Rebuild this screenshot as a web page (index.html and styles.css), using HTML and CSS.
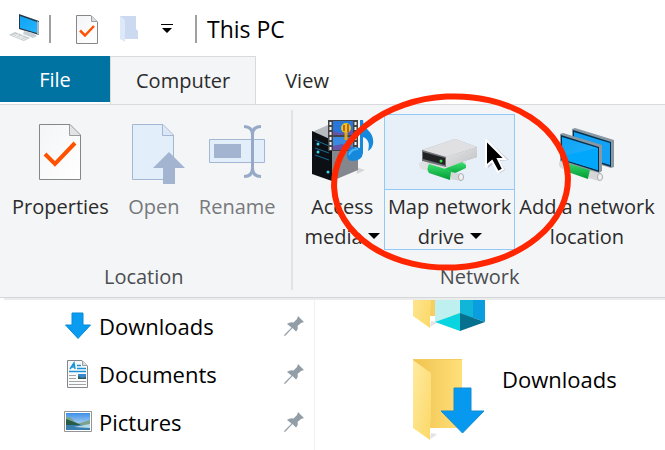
FILE: index.html
```html
<!DOCTYPE html>
<html lang="en">
<head>
    <meta charset="UTF-8">
    <meta name="viewport" content="width=device-width, initial-scale=1.0">
    <title>This PC</title>
    <link rel="stylesheet" href="styles.css">
</head>
<body>

    <!-- Shared shapes -->
    <svg class="defs" width="0" height="0" aria-hidden="true">
        <defs>
            <linearGradient id="paper" x1="0" y1="0" x2="1" y2="1">
                <stop offset="0" stop-color="#f4f5f7"/>
                <stop offset="1" stop-color="#ffffff"/>
            </linearGradient>
            <linearGradient id="folderBack" x1="0" y1="0" x2="1" y2="0">
                <stop offset="0" stop-color="#f0c34e"/>
                <stop offset="1" stop-color="#ffe07a"/>
            </linearGradient>
            <linearGradient id="folderFlap" x1="0" y1="0" x2="1" y2="1">
                <stop offset="0" stop-color="#ffeaa0"/>
                <stop offset="1" stop-color="#fbd867"/>
            </linearGradient>
            <linearGradient id="screen" x1="0" y1="0" x2="1" y2="1">
                <stop offset="0" stop-color="#10a4f4"/>
                <stop offset="1" stop-color="#24b4ff"/>
            </linearGradient>
            <linearGradient id="pipe" x1="0" y1="0" x2="0" y2="1">
                <stop offset="0" stop-color="#3ce070"/>
                <stop offset="1" stop-color="#009a34"/>
            </linearGradient>
            <linearGradient id="metal" x1="0" y1="0" x2="1" y2="1">
                <stop offset="0" stop-color="#e6e6e8"/>
                <stop offset="1" stop-color="#c0c1c4"/>
            </linearGradient>
            <linearGradient id="sky" x1="0" y1="0" x2="0" y2="1">
                <stop offset="0" stop-color="#3d8fe6"/>
                <stop offset="1" stop-color="#e2f3fb"/>
            </linearGradient>
            <symbol id="pin" viewBox="0 0 20 20">
                <path d="M14 0 L20 6 L17 7 L13.500 10 Q14.500 13 12 15.500 L8.500 12 L1.500 19.500 L0 20 L.5 18.500 L7.500 11.500 L3 8 Q6 5.500 9.500 6.500 L13 3 Z" fill="#929ea7"/>
            </symbol>
            <symbol id="folder" viewBox="0 0 52 84">
                <path d="M17 80 L22 77 L24 75 L18 74 Z" fill="#e4e4e4"/>
                <path d="M0 0 H49 V69 H16 L0 60 Z" fill="url(#folderBack)"/>
                <path d="M0 1 L18 14 V58 L17 69 V81 L0 69 Z" fill="url(#folderFlap)"/>
                <path d="M0 .5 H49" stroke="#f3cd61"/>
            </symbol>
        </defs>
    </svg>

    <!-- Title bar -->
    <header class="title-bar">
        <svg class="pc-icon" width="32" height="30" viewBox="0 0 32 30" aria-hidden="true">
            <path d="M10 0 L30 7 V21 L10 15 Z" fill="#263a49"/>
            <path d="M11 2 L28 8 V19 L11 14 Z" fill="url(#screen)"/>
            <path d="M28 7 L30 8 V21 L28 20 Z" fill="#aab5bd"/>
            <path d="M15 17 L24 19 L28 22 L24 24 L14 20 Z" fill="#c9d0d5"/>
            <path d="M0 21 L6 18 L21 24 L15 27 Z" fill="#c2c8cc"/>
            <path d="M3 21 L16 26 M5 20 L18 25 M7 22 L11 19 M11 24 L15 21" stroke="#edf0f2"/>
        </svg>
        <span class="bar-line"></span>
        <button class="quick-btn" aria-label="Properties">
            <svg width="22" height="29" viewBox="0 0 22 29">
                <path d="M.5 .5 H15 L21.500 7 V28.500 H.5 Z" fill="url(#paper)" stroke="#85878a"/>
                <path d="M15.500 1 V6.500 H21" fill="#dcdddd" stroke="#9b9d9f"/>
                <path d="M4 15.500 L9 20.500 L18 11" fill="none" stroke="#ff5200" stroke-width="2.500"/>
            </svg>
        </button>
        <button class="quick-btn" aria-label="New folder">
            <svg width="22" height="28" viewBox="-3 0 22 28">
                <path d="M1 1 H17 V14 L19 16 V24 H6 L1 22 Z" fill="#cbdaf0"/>
                <path d="M1 1 L6 5 V27 L1 24 Z" fill="#dde8f8"/>
            </svg>
        </button>
        <button class="quick-btn" aria-label="Customize Quick Access Toolbar">
            <svg width="12" height="10" viewBox="0 0 12 10">
                <path d="M0 0 H12 V1 H0 Z M1 4 H11 L6 9 Z" fill="#000"/>
            </svg>
        </button>
        <span class="bar-line"></span>
        <h1 class="title">This PC</h1>
    </header>

    <!-- Tabs -->
    <nav class="tabs">
        <button class="tab tab-file">File</button>
        <button class="tab tab-active">Computer</button>
        <button class="tab">View</button>
    </nav>

    <!-- Ribbon -->
    <section class="ribbon">
        <div class="group group-location">
            <div class="group-buttons">
                <button class="ribbon-btn">
                    <span class="btn-icon">
                        <svg width="42" height="60" viewBox="0 0 42 60">
                            <path d="M.5 .5 H31 L41.500 11 V55.500 H.5 Z" fill="url(#paper)" stroke="#85878a"/>
                            <path d="M30.500 1 V11.500 H41" fill="#e2e3e4" stroke="#9b9d9f"/>
                            <path d="M6 30 L16 40 L36 19" fill="none" stroke="#ff5200" stroke-width="4"/>
                        </svg>
                    </span>
                    <span class="btn-text">Properties</span>
                </button>
                <button class="ribbon-btn" disabled>
                    <span class="btn-icon">
                        <svg width="64" height="60" viewBox="-10 0 64 60">
                            <path d="M.5 .5 H31 L41.500 11 V55.500 H.5 Z" fill="#e3eefb" stroke="#a5b6d3"/>
                            <path d="M30.500 1 V11.500 H41" fill="#dbe7f7" stroke="#a5b6d3"/>
                            <path d="M37 28 L53 44 H43 V60 H31 V44 H21 Z" fill="#a2b4d0"/>
                        </svg>
                    </span>
                    <span class="btn-text">Open</span>
                </button>
                <button class="ribbon-btn" disabled>
                    <span class="btn-icon">
                        <svg width="56" height="60" viewBox="0 0 56 60">
                            <path d="M.5 15.500 H55.500 V38.500 H.5 Z" fill="#e3eefb" stroke="#a5b6d3"/>
                            <path d="M5 20 H32 V34 H5 Z" fill="#a2b4d0"/>
                            <path d="M35 2.500 Q43.500 2.500 43.500 11 Q43.500 2.500 52 2.500 M43.500 8 V47 M35 52.500 Q43.500 52.500 43.500 44 Q43.500 52.500 52 52.500" fill="none" stroke="#96aac8" stroke-width="3"/>
                        </svg>
                    </span>
                    <span class="btn-text">Rename</span>
                </button>
            </div>
            <div class="group-label">Location</div>
        </div>

        <div class="group group-network">
            <div class="group-buttons">
                <button class="ribbon-btn">
                    <span class="btn-icon">
                        <svg width="64" height="62" viewBox="0 0 64 62">
                            <path d="M47 54 L55 50 L46 47 Z" fill="#d5d6d8"/>
                            <path d="M2 12 L18 5 L48 12 L24 22 Z" fill="#b8bbc0"/>
                            <path d="M22 20 L48 12 V50 L22 61 Z" fill="#84878d"/>
                            <path d="M2 11 L22 20 V61 L2 54 Z" fill="#0c1015"/>
                            <path d="M5 20 L19 26 M5 28 L19 33 M5 35 L19 40" stroke="#176b98"/>
                            <circle cx="8" cy="24" r="1.500" fill="#34d6ee"/>
                            <circle cx="8" cy="32" r="1.500" fill="#34d6ee"/>
                            <circle cx="18" cy="52" r="1.500" fill="#34d6ee"/>
                            <path d="M18 0 H48 V31 H18 Z" fill="#444"/>
                            <path d="M23 1 H43 V15 H23 Z" fill="#2777da"/>
                            <path d="M23 17 H43 V30 H23 Z" fill="#388ae2"/>
                            <path d="M23 11 L30 13 L43 10 V15 H23 Z M23 26 L32 24 L43 28 V30 H23 Z" fill="#6554a9"/>
                            <circle cx="36" cy="8" r="5" fill="#edc615"/>
                            <path d="M33 5 H35 V11 H33 Z M37 4 H39 V12 H37 Z" fill="#bd6530"/>
                            <path d="M36 13 V20" stroke="#dfa81c" stroke-width="3"/>
                            <path d="M20.500 2 V30 M45.500 2 V30" stroke="#f4f4f4" stroke-width="2" stroke-dasharray="3 2"/>
                            <path d="M50 0 H53 C53 10 65 11 63 24 Q62 29 58 31 Q61 20 53 17 V33 Q52 41 42 41 Q36 40 37 33 Q40 25 50 28 Z" fill="#1689dc"/>
                            <path d="M39 35 Q41 29 48 29" fill="none" stroke="#4bb5f5" stroke-width="2"/>
                        </svg>
                    </span>
                    <span class="btn-text">Access<br>media <i class="caret"></i></span>
                </button>
                <button class="ribbon-btn hovered">
                    <span class="btn-icon">
                        <svg width="62" height="44" viewBox="0 0 62 44">
                            <path d="M2 25 L47 24 L46 30 L4 31 Z" fill="#d8dadd"/>
                            <path d="M0 25 Q2 23 4 24 L10 26 V33 L2 31 Q0 29 0 25 Z" fill="#dfe0e2"/>
                            <path d="M25 31 L43 24 L47 27 V30 L30 38 Z" fill="url(#pipe)"/>
                            <path d="M10 26 L33 33 L31 42 L10 35 Q7 31 10 26 Z" fill="url(#pipe)"/>
                            <path d="M32 34 L43 36 Q45 39 42 43 L31 41 Z" fill="#d5d8d9"/>
                            <ellipse cx="42" cy="39" rx="2.500" ry="3.500" fill="#f1f2f2" stroke="#a9abad"/>
                            <path d="M3 12 L36 1 L58 9 V19 L27 29 Z" fill="#aeb0b3"/>
                            <path d="M3 12 L36 1 L58 9 L27 19 Z" fill="#e0e0e2"/>
                            <path d="M27 19 L58 9 V19 L27 29 Z" fill="url(#metal)"/>
                            <path d="M3 12 L27 19 V29 L3 23 Z" fill="#707276"/>
                            <path d="M4 14 L26 20 V27 L4 21 Z" fill="#202224"/>
                            <circle cx="22" cy="23" r="1.500" fill="#34e34c"/>
                        </svg>
                        <svg class="cursor" width="30" height="38" viewBox="0 0 30 38" aria-hidden="true">
                            <path d="M4 2 V29 L10 24 L16 34 L21 31 L16 22 L25 21 Z" fill="#a9aeb5" opacity=".6"/>
                            <path d="M2 1 V27 L8 22 L14 33 L19 30 L14 20 H21 Z" fill="#000" stroke="#fff" stroke-width="2"/>
                        </svg>
                    </span>
                    <span class="btn-text">Map network<br>drive <i class="caret"></i></span>
                </button>
                <button class="ribbon-btn">
                    <span class="btn-icon">
                        <svg width="56" height="54" viewBox="0 0 56 54">
                            <path d="M0 34 Q2 31 5 34 V41 Q1 41 0 37 Z" fill="#d8dadb"/>
                            <path d="M5 33 L33 41 L29 51 L6 43 Z" fill="url(#pipe)"/>
                            <path d="M31 42 L42 45 Q44 49 40 53 L29 50 Z" fill="#d4d6d7"/>
                            <ellipse cx="41" cy="49" rx="2.500" ry="3.500" fill="#f1f2f2" stroke="#a9abad"/>
                            <path d="M13 1 L16 0 L55 12 V39 L52 40 L13 28 Z" fill="#8998a3"/>
                            <path d="M14 2 L52 14 V39 L14 27 Z" fill="#05314c"/>
                            <path d="M15 4 L51 15 V37 L15 26 Z" fill="#12a1f5"/>
                            <path d="M1 6 L4 5 L43 17 V43 L40 45 L1 33 Z" fill="#8998a3"/>
                            <path d="M2 7 L40 19 V44 L2 32 Z" fill="#05314c"/>
                            <path d="M3 9 L39 20 V42 L3 31 Z" fill="url(#screen)"/>
                            <path d="M3 28 L39 20 V42 L3 31 Z" fill="#00a7fb"/>
                        </svg>
                    </span>
                    <span class="btn-text">Add a network<br>location</span>
                </button>
            </div>
            <div class="group-label">Network</div>

            <svg class="marker" width="248" height="184" viewBox="0 0 248 184" aria-hidden="true">
                <ellipse cx="124" cy="92" rx="117" ry="85.500" transform="rotate(-3 124 92)" fill="none" stroke="#ff2600" stroke-width="6"/>
            </svg>
        </div>
    </section>

    <!-- Explorer panes -->
    <div class="explorer">
        <nav class="side-nav">
            <a class="side-link" href="#">
                <svg width="28" height="28" viewBox="0 0 28 28">
                    <path d="M8 1 H19 V13 H26.500 L14 26.500 L1.500 13 H8 Z" fill="#0a9cf0" stroke="#078bd7"/>
                </svg>
                <span class="side-text">Downloads</span>
                <svg class="pin" width="20" height="20"><use href="#pin"/></svg>
            </a>
            <a class="side-link" href="#">
                <svg width="28" height="28" viewBox="0 0 28 28">
                    <path d="M3.500 .5 H18 L23.500 6 V27.500 H3.500 Z" fill="url(#paper)" stroke="#85878a"/>
                    <path d="M18.500 1 V5.500 H23" fill="#dcdddd" stroke="#9b9d9f"/>
                    <path d="M6 9 L10 3 L11 9 M8 7 H11 M13 5.500 H17 M13 8.500 H22 M5 11.500 H22" fill="none" stroke="#1993d6" stroke-width="1.500"/>
                    <path d="M5 15.500 H12 M5 18.500 H12 M5 21.500 H22 M5 24.500 H22" stroke="#a1a3a5"/>
                    <path d="M14 14 H22 V19 H14 Z" fill="#3789cc"/>
                    <path d="M14 16 L18 18 L22 17 V19 H14 Z" fill="#315b58"/>
                </svg>
                <span class="side-text">Documents</span>
                <svg class="pin" width="20" height="20"><use href="#pin"/></svg>
            </a>
            <a class="side-link" href="#">
                <svg width="28" height="28" viewBox="0 0 28 28">
                    <path d="M.5 3.500 H27.500 V23.500 H.5 Z" fill="#fff" stroke="#929496"/>
                    <path d="M2 5 H26 V22 H2 Z" fill="url(#sky)"/>
                    <path d="M2 9 Q6 8 9 12 T16 15 L26 12 V17 H2 Z" fill="#7ba38f"/>
                    <path d="M2 11 L10 14 L17 17 H2 Z" fill="#285c48"/>
                    <path d="M2 17 H26 V22 H2 Z" fill="#397fae"/>
                    <path d="M10 19 L26 16 V20 Z" fill="#b7dae8"/>
                </svg>
                <span class="side-text">Pictures</span>
                <svg class="pin" width="20" height="20"><use href="#pin"/></svg>
            </a>
        </nav>

        <main class="files">
            <div class="file">
                <svg width="74" height="84" viewBox="0 0 74 84">
                    <use href="#folder" width="52" height="84"/>
                    <path d="M22 42 L47 32 V66 L22 75 Z" fill="#bdf0ee"/>
                    <path d="M47 32 L72 42 V75 L47 66 Z" fill="#0a9de0"/>
                    <path d="M47 32 L60 37 V71 L47 66 Z" fill="#11b5d7"/>
                    <path d="M22 75 L47 66 V84 Z" fill="#08d5df"/>
                    <path d="M47 66 L72 75 L47 84 Z" fill="#06718f"/>
                </svg>
            </div>
            <div class="file">
                <svg width="74" height="84" viewBox="0 0 74 84">
                    <use href="#folder" width="52" height="84"/>
                    <path d="M41 29 H58 V52 H71 L49.500 74 L28 52 H41 Z" fill="#0798ef" stroke="#138bcf"/>
                </svg>
                <span class="file-name">Downloads</span>
            </div>
        </main>
    </div>

</body>
</html>
```

FILE: styles.css
```css
* {
    box-sizing: border-box;
}

body {
    font-family: 'Open Sans', 'Noto Sans', sans-serif;
    display: flex;
    flex-direction: column;
    height: 100vh;
    margin: 0;
    background: #ffffff;
    color: #000000;
    overflow: hidden;
}

button {
    font-family: inherit;
    font-size: 20px;
    color: inherit;
    border: none;
    background: none;
    padding: 0;
    cursor: pointer;
}

svg {
    display: block;
    flex-shrink: 0;
}

.defs {
    position: absolute;
}

/* Title Bar */
.title-bar {
    display: flex;
    align-items: center;
    height: 56px;
    padding: 2px 9px 0;
    flex-shrink: 0;
}

.bar-line {
    width: 2px;
    height: 28px;
    margin: 0 8px;
    background: #a0a0a0;
}

.quick-btn {
    display: flex;
    align-items: center;
    justify-content: center;
    width: 40px;
    height: 32px;
}

.quick-btn:first-of-type {
    margin-left: 8px;
}

.title {
    margin: 0 0 0 2px;
    font-size: 23px;
    font-weight: 400;
    line-height: 30px;
}

/* Tabs */
.tabs {
    display: flex;
    height: 48px;
    flex-shrink: 0;
    color: #2b2b2b;
}

.tab {
    padding: 0 28px;
    border: 1px solid transparent;
    border-bottom: none;
}

.tab-file {
    width: 110px;
    height: 46px;
    background: #0173a3;
    color: #ffffff;
    border: none;
}

.tab-active {
    padding: 0 25px;
    background: #f4f5f7;
    border-color: #d9dadb;
}

/* Ribbon */
.ribbon {
    display: flex;
    flex-shrink: 0;
    background: #f4f5f7;
    border-top: 1px solid #d9dadb;
    border-bottom: 1px solid #d4d7da;
    box-shadow: 4px 2px 0 #ececed;
    padding: 5px 0 7px;
    color: #2b2b2b;
    position: relative;
}

.group {
    display: flex;
    flex-direction: column;
    height: 180px;
    padding-top: 4px;
    position: relative;
}

.group-location {
    padding-left: 8px;
    padding-right: 11px;
    border-right: 2px solid #e1e3e5;
}

.group-network {
    padding-left: 8px;
}

.group-buttons {
    display: flex;
}

.group-location .group-buttons {
    gap: 8px;
}

.ribbon-btn {
    display: flex;
    flex-direction: column;
    align-items: center;
    justify-content: flex-start;
    height: 136px;
    padding: 0;
    border: 1px solid transparent;
}

.ribbon-btn:disabled {
    color: #77797c;
    cursor: default;
}

.btn-icon {
    display: flex;
    justify-content: center;
    align-items: flex-end;
    width: 100%;
    height: 75px;
    padding-bottom: 7px;
    border-bottom: 1px solid transparent;
    flex-shrink: 0;
    position: relative;
}

.group-location .btn-icon {
    padding-bottom: 5px;
}

.btn-text {
    padding: 2px 3px 0;
    line-height: 30px;
    white-space: nowrap;
    flex-shrink: 0;
}

.caret {
    display: inline-block;
    border: 6px solid transparent;
    border-top-color: #000000;
    border-bottom: none;
    vertical-align: 5px;
}

.hovered,
.hovered .btn-icon {
    border-color: #91c9f7;
}

.hovered .btn-icon {
    background: #e7eff9;
}

.cursor {
    position: absolute;
    right: 0;
    top: 24px;
}

.group-label {
    margin-top: 12px;
    text-align: center;
    font-size: 20px;
    line-height: 30px;
    color: #4b4d50;
}

.marker {
    position: absolute;
    left: 34px;
    top: -20px;
    pointer-events: none;
}

/* Explorer */
.explorer {
    display: flex;
    flex: 1;
    min-height: 0;
}

.side-nav {
    width: 315px;
    padding-top: 4px;
    border-right: 1px solid #f0f0f0;
    flex-shrink: 0;
}

.side-link {
    display: flex;
    align-items: center;
    height: 48px;
    padding: 0 10px 0 64px;
    color: inherit;
    text-decoration: none;
    font-size: 22px;
}

.side-text {
    flex: 1;
    padding-left: 7px;
}

.files {
    flex: 1;
    overflow: hidden;
}

.file {
    display: flex;
    align-items: flex-start;
    gap: 15px;
    height: 112px;
    padding: 15px 0 0 98px;
}

.file:first-child {
    margin-top: -66px;
}

.file-name {
    padding-top: 5px;
    font-size: 22px;
    line-height: 30px;
}
```
